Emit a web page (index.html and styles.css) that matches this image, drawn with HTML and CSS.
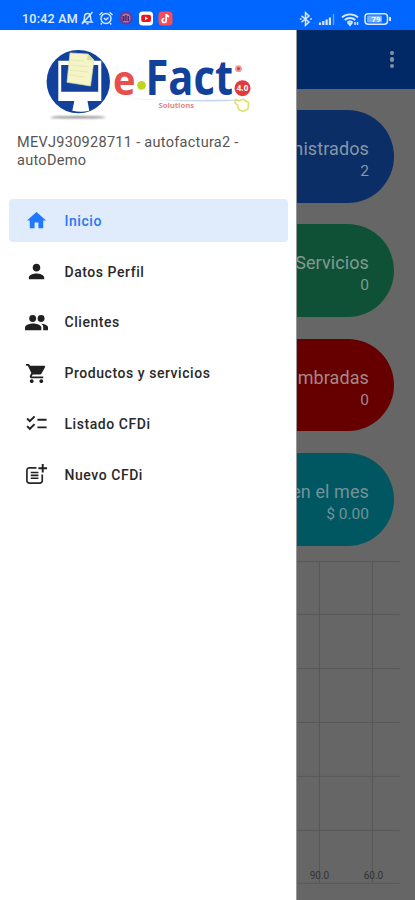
FILE: index.html
```html
<!DOCTYPE html>
<html lang="es">
<head>
<meta charset="utf-8">
<title>e-Fact</title>
<link rel="stylesheet" href="styles.css">
</head>
<body>
<div class="phone">
  <header class="status">
    <span class="clock">10:42 AM</span>
    <svg class="st-left" width="94" height="16" viewBox="0 0 94 16" fill="none" stroke="#d9e8ff" stroke-width="1.4">
      <path d="M3 12h9c-1.600-1.500-1.500-3-1.500-5 0-2-1.200-3.500-3-3.500S4.500 5 4.500 7c0 2 0 3.500-1.500 5zM6.500 13.800h2M12.500 2 2 14"/>
      <circle cx="26" cy="8.500" r="5"/><path d="M19.500 5 22.500 2.300M32.500 5 29.500 2.300M23.800 8l2.200 1.800L28.500 7.500M22 13l-1.300 1.500M30 13l1.300 1.500"/>
      <g stroke="none"><circle cx="46" cy="8" r="6.700" fill="#673b96"/><circle cx="46" cy="8" r="4.500" fill="#b279a5"/><path fill="#49206b" d="M42.500 6h2v5h-2zM45.200 5h1.500v6h-1.500zM47.500 6H49v5h-1.500z"/>
      <rect x="59" y="1.500" width="14" height="14" rx="3.500" fill="#fff"/><rect x="61.200" y="4.700" width="9.800" height="7.300" rx="2" fill="#f0151b"/><path d="m65 6.500 3 1.800-3 1.900z" fill="#fff"/>
      <rect x="78.500" y="1.500" width="14" height="14" rx="3.500" fill="#f64d58"/></g>
      <path stroke="#fff" stroke-width="1.700" d="M86.200 4v6.500a2 2 0 1 1-2-2M86.200 4c.3 1.700 1.300 2.500 3 2.600"/>
    </svg>
    <svg class="st-right" width="94" height="16" viewBox="0 0 94 16" fill="none" stroke="#d9e8ff" stroke-width="1.500">
      <path d="M2.500 4.800 10 11l-3.500 3.300V1.700L10 5l-7.500 6.200M.8 8h1.800M11 8h1.800"/>
      <g stroke-width="2.200"><path d="M21 14v-2.500M24.300 14v-4M27.600 14V8.500M30.900 14V6.500"/><path opacity=".45" d="M34.500 14V3" stroke-width="1.500"/></g>
      <path stroke-width="1.800" d="M43 6.300c4.500-4 11.500-4 16 0M45.700 9c3-2.700 7.600-2.700 10.600 0M48.300 11.500c1.800-1.300 3.600-1.300 5.400 0"/><path d="m49.500 12.500 1.500 1.800 1.500-1.800zM56 14v-3M58.500 11v3"/>
      <rect x="66" y="2.700" width="22.500" height="10.600" rx="3.200"/><rect x="68" y="4.500" width="15" height="7" rx="1.500" fill="#77aeff" stroke="none"/><path d="M91 6v4" stroke-width="2"/>
      <text x="77" y="11.200" class="batt">79</text>
    </svg>
  </header>
  <div class="screen">
    <main class="page">
      <div class="appbar"><i></i><i></i><i></i></div>
      <section class="cards">
        <article class="card blue"><span>nistrados</span><b>2</b></article>
        <article class="card green"><span>Servicios</span><b>0</b></article>
        <article class="card red"><span>mbradas</span><b>0</b></article>
        <article class="card teal"><span>en el mes</span><b>$ 0.00</b></article>
      </section>
      <svg class="chart" width="415" height="339" viewBox="0 0 415 339">
        <path d="M0 .5h400M0 53.500h400M0 107.500h400M0 161.500h400M0 215.500h400M0 269.500h400M0 322.500h400M319.500 1v321M372.500 1v321"/>
        <text x="319.500" y="318">90.0</text><text x="373.500" y="318">60.0</text>
      </svg>
    </main>
    <aside class="drawer">
      <svg class="logo" width="212" height="76" viewBox="0 0 212 76">
        <defs><filter id="soft" x="-10%" y="-100%" width="120%" height="300%"><feGaussianBlur stdDeviation=".8"/></filter></defs>
        <ellipse cx="34" cy="69.300" rx="28" ry="1" fill="#777" filter="url(#soft)"/>
        <circle cx="34.300" cy="33.600" r="31.700" fill="#12419c"/>
        <path fill="#fff" d="M14.300 12.700h43V53H43.500l1.800 9.700q-8.500 2-17 0L30.300 53h-16z"/>
        <path fill="#12419c" d="M17.200 17h37v26.700h-37z"/>
        <path d="m26 4.900 18 1.200 6 6L46.500 38 23 34.300z" fill="#f4f4c7" stroke="#d9dda8" stroke-width=".7"/>
        <path d="m44 6.100-1 6 7 .5" fill="#d8dda0"/><path d="m27 12 13 1m-13.500 4 18 1.800M26 22l18 2m-18.500 3 15 2" stroke="#e2e5b0" stroke-width=".8"/>
        <path d="M84 50c30 4 70 1 117 2-40 3-80 1-117-2z" fill="#c5daf1"/>
        <text class="lg-e" x="69" y="47" textLength="22.500" lengthAdjust="spacingAndGlyphs">e</text>
        <circle cx="97.500" cy="37.300" r="4.400" fill="#c0d51d"/>
        <text class="lg-fact" x="101.500" y="47.300" textLength="87.500" lengthAdjust="spacingAndGlyphs">Fact</text>
        <text class="lg-sol" x="114.500" y="59.800" textLength="35.500" lengthAdjust="spacingAndGlyphs">Solutions</text>
        <circle cx="194.500" cy="20.700" r="3.400" fill="#ef9a98"/><circle cx="194.500" cy="20.700" r="1.600" fill="#d74348"/>
        <circle cx="198.500" cy="40.200" r="8" fill="#df3c40"/><text class="lg-ver" x="198.500" y="43.200">4.0</text>
        <path d="m191.500 51.500 3.500 1.500 4-2 5.500 3.500-.5 6.500-5 2.500-4.500-2-1-4.500-2.500-2z" fill="#fffff4" stroke="#d9e26c" stroke-width="1.500"/>
      </svg>
      <p class="account">MEVJ930928711 - autofactura2 -<br>autoDemo</p>
      <nav class="menu">
        <a class="item active"><svg viewBox="0 0 24 24"><path d="M10 20v-6h4v6h5v-8h3L12 3 2 12h3v8z"/></svg>Inicio</a>
        <a class="item"><svg viewBox="0 0 24 24"><path d="M12 12c2.210 0 4-1.790 4-4s-1.790-4-4-4-4 1.790-4 4 1.790 4 4 4zm0 2c-2.670 0-8 1.340-8 4v2h16v-2c0-2.660-5.330-4-8-4z"/></svg>Datos Perfil</a>
        <a class="item"><svg viewBox="0 0 24 24"><path d="M16.670 13.130C18.040 14.060 19 15.320 19 17v3h5v-3c0-2.180-4.570-3.470-7.330-3.870z"/><circle cx="16.800" cy="7.800" r="3.600"/><circle cx="8" cy="7.800" r="3.600"/><path d="M8.500 13C5.500 13 0 14.340 0 17v3h17v-3c0-2.660-5.500-4-8.500-4z"/></svg>Clientes</a>
        <a class="item"><svg viewBox="0 0 24 24"><path d="M7 18c-1.100 0-1.990.9-1.990 2S5.900 22 7 22s2-.9 2-2-.9-2-2-2zM1 2v2h2l3.600 7.590-1.350 2.450c-.16.28-.25.61-.25.96 0 1.100.9 2 2 2h12v-2H7.420c-.14 0-.25-.11-.25-.25l.03-.12.900-1.630h7.450c.75 0 1.410-.41 1.750-1.030l3.580-6.490c.08-.14.12-.31.12-.48 0-.55-.45-1-1-1H5.210l-.94-2H1zm16 16c-1.100 0-1.990.9-1.990 2s.89 2 1.990 2 2-.9 2-2-.9-2-2-2z"/></svg>Productos y servicios</a>
        <a class="item"><svg viewBox="0 0 24 24"><path d="M22.500 7H13v2h9.500V7zm0 8H13v2h9.500v-2zM5.040 11 1.500 7.460l1.410-1.410 2.120 2.120 4.240-4.240 1.410 1.410L5.040 11zm0 8L1.500 15.460l1.410-1.410 2.120 2.120 4.240-4.240 1.410 1.410L5.040 19z"/></svg>Listado CFDi</a>
        <a class="item"><svg viewBox="0 0 24 24"><path d="M12 5H4.500a2.500 2.500 0 0 0-2.500 2.500v11A2.500 2.500 0 0 0 4.500 21h11a2.500 2.500 0 0 0 2.500-2.500V12" fill="none" stroke="#292929" stroke-width="1.800"/><path d="M19.500 1h-2v3.500H14v2h3.500V10h2V6.500H23v-2h-3.500zM6 9h8v1.800H6zM6 12h8v1.800H6zM6 15h8v1.800H6z"/></svg>Nuevo CFDi</a>
      </nav>
    </aside>
  </div>
</div>
</body>
</html>
```
FILE: styles.css
```css
* { box-sizing: border-box; }
body { margin: 0; font-family: Roboto, "Liberation Sans", sans-serif; }
.phone { width: 415px; height: 900px; overflow: hidden; display: flex; flex-direction: column; }
.status { height: 30px; flex: none; background: #0066ff; display: flex; align-items: flex-start; padding: 10px 22px 0; color: #e3eeff; }
.clock { width: 57px; font-size: 12.5px; line-height: 18px; font-weight: 500; white-space: nowrap; letter-spacing: .25px; }
.st-left { margin-left: 1px; }
.st-right { margin: 1px 0 0 auto; }
.batt { font-size: 8px; font-weight: 700; fill: #fff; stroke: none; text-anchor: middle; }
.screen { flex: 1; position: relative; }
.page { height: 870px; background: #666; display: flex; flex-direction: column; }
.appbar { height: 59px; flex: none; background: #002966; display: flex; flex-direction: column; align-items: flex-end; justify-content: center; gap: 2.200px; padding-right: 21px; }
.appbar i { width: 4.400px; height: 4.400px; border-radius: 50%; background: #8690a0; }
.cards { display: flex; flex-direction: column; gap: 21.500px; padding: 21px 21px 0; }
.card { height: 92.800px; border-radius: 46.400px; padding: 26px 25px 0 0; display: flex; flex-direction: column; align-items: flex-end; color: #8996a5; }
.card span { font-size: 18px; line-height: 25px; letter-spacing: .1px; }
.card b { font-size: 15.500px; line-height: 20px; font-weight: 400; }
.blue { background: #0b2e66; }
.green { background: #0f5137; color: #829a90; }
.red { background: #660000; color: #a48888; }
.teal { background: #005761; color: #739298; }
.chart { display: block; margin-top: 15.500px; }
.chart path { stroke: #585858; fill: none; }
.chart text { font-size: 10px; fill: #333; text-anchor: middle; }
.drawer { position: absolute; left: 0; top: 0; width: 297px; height: 870px; background: #fff; border-right: 1px solid #999; }
.logo { display: block; margin: 18px 0 0 44px; }
.lg-e { font: 700 41px "Open Sans", sans-serif; fill: #e6504d; }
.lg-fact { font: 700 48px "Open Sans", sans-serif; fill: #12419c; }
.lg-sol { font: 700 6.500px "Open Sans", sans-serif; fill: #e58684; }
.lg-ver { font: 700 8px "Open Sans", sans-serif; fill: #fff; text-anchor: middle; }
.account { margin: 10px 0 0 17px; font-size: 14.500px; line-height: 17.500px; letter-spacing: .29px; color: #555; white-space: nowrap; }
.menu { margin: 30px 8px 0 9px; display: flex; flex-direction: column; gap: 8.300px; }
.item { height: 42.500px; display: flex; align-items: center; padding: 1px 0 0 16px; border-radius: 4px; font-size: 14px; font-weight: 500; letter-spacing: .55px; color: #292929; }
.item svg { width: 23px; height: 23px; margin-right: 16.500px; fill: #202020; }
.active { background: #e0ebfb; color: #2978f0; }
.active svg { fill: #1f78ff; }
```
